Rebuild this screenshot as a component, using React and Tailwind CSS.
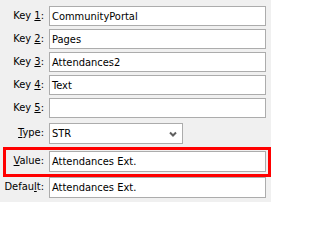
import React from 'react';

const font = { fontFamily: '"DejaVu Sans Condensed", "Liberation Sans", Arial, sans-serif' };

function Label({ text, mn, after, width = 'w-[49px]' }) {
  return (
    <div className={`${width} shrink-0 pr-[5px] text-right`}>
      {text}
      <span className="underline underline-offset-[1px]">{mn}</span>
      {after}
    </div>
  );
}

function Field({ value, h = 'h-[20px]' }) {
  return (
    <div className={`${h} w-[217px] border border-[#acacac] bg-white pl-[2px] flex items-center leading-none`}>
      {value}
    </div>
  );
}

export default function App() {
  const keys = [
    ['1', 'CommunityPortal'],
    ['2', 'Pages'],
    ['3', 'Attendances2'],
    ['4', 'Text'],
    ['5', ''],
  ];

  return (
    <div
      className="w-[271px] h-[202px] bg-[#f0f0f0] pt-[6px] text-[11px] text-black overflow-hidden"
      style={font}
    >
      <div className="flex flex-col gap-[3px]">
        {keys.map(([n, v]) => (
          <div key={n} className="flex items-center">
            <Label text="Key " mn={n} after=":" />
            <Field value={v} />
          </div>
        ))}
      </div>

      <div className="flex items-center mt-[5px]">
        <Label text="" mn="T" after="ype:" />
        <div className="h-[21px] w-[134px] border border-[#acacac] bg-white pl-[2px] pr-[5px] flex items-center justify-between leading-none">
          <span>STR</span>
          <svg width="8" height="6" viewBox="0 0 8 6">
            <path d="M1 1.5 L4 4.5 L7 1.5" fill="none" stroke="#5f5f5f" strokeWidth="2" />
          </svg>
        </div>
      </div>

      <div className="ml-[3px] mt-[3px] w-[268px] border-[3px] border-[#ff0000] pt-[1px] pb-[2px] flex items-center">
        <Label text="" mn="V" after="alue:" width="w-[43px]" />
        <Field value="Attendances Ext." h="h-[21px]" />
      </div>

      <div className="flex items-center">
        <Label text="Defau" mn="l" after="t:" />
        <Field value="Attendances Ext." h="h-[21px]" />
      </div>
    </div>
  );
}
